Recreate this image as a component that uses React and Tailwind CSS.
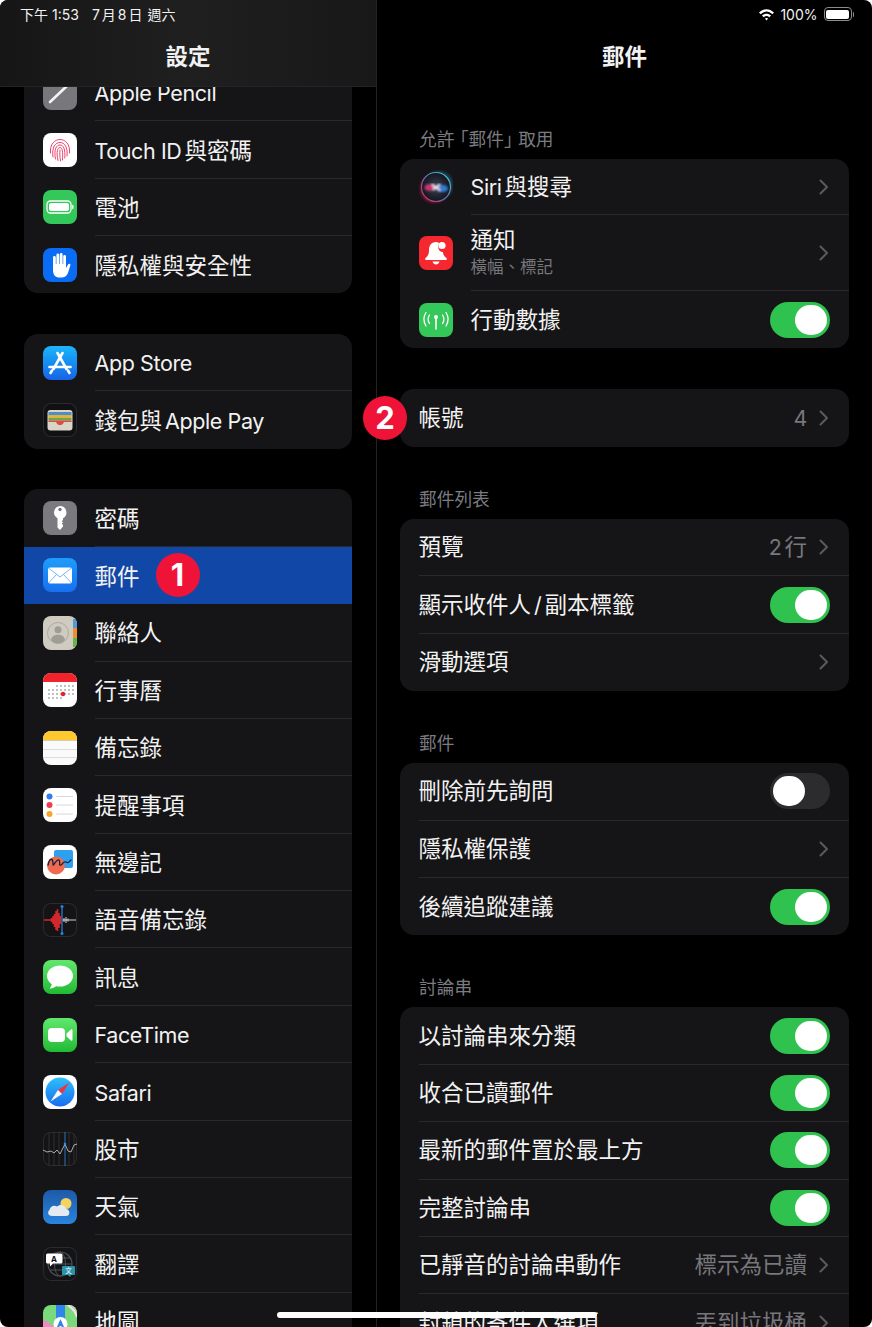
import React from 'react';

// Latin runs are set a little smaller and tighter than the CJK around them
const Mixed = ({ text }) => {
  const parts = text.split(/([A-Za-z0-9 /]*[A-Za-z0-9/])/);
  return parts.map((part, i) => {
    if (!part) return null;
    if (i % 2 === 0) return <span key={i}>{part}</span>;
    const before = parts[i - 1] ? 'ml-[3px]' : '';
    const after = parts[i + 1] ? 'mr-[3px]' : '';
    return <span key={i} className={`text-[21.5px] tracking-[-0.4px] ${before} ${after}`}>{part}</span>;
  });
};

// App icons, all drawn in a 34x34 box
const Tile = ({ className = '', children }) => (
  <div className={`w-[34px] h-[34px] rounded-[8px] overflow-hidden shrink-0 ${className}`}>
    <svg viewBox="0 0 34 34" width="34" height="34">{children}</svg>
  </div>
);

const PencilIcon = () => (
  <Tile className="bg-[#77777c]">
    <path d="M7 26 L25 9" stroke="#f4f4f4" strokeWidth="2.6" strokeLinecap="round" />
  </Tile>
);

const TouchIdIcon = () => (
  <Tile className="bg-white">
    <g fill="none" stroke="#e8436a" strokeWidth="1" strokeLinecap="round">
      <path d="M7.5 20 C6.5 11 12 6.5 17 6.5 C22 6.5 27.5 11 26.5 20" />
      <path d="M10 24 C8.5 14 12.5 9.5 17 9.5 C21.5 9.5 25 14 24 23" />
      <path d="M12.5 26 C10.5 16 13.5 12 17 12 C20.5 12 22.5 16 21.8 25" />
      <path d="M15 27.5 C13 19 14.5 14.5 17 14.5 C19.5 14.5 20 19 19.5 27" />
      <path d="M17 17 C16.5 21 17 25 17.5 28" />
    </g>
  </Tile>
);

const BatteryIcon = () => (
  <Tile className="bg-[#34c759]">
    <rect x="4" y="11" width="24" height="12" rx="3.5" fill="none" stroke="#fff" strokeWidth="1.3" />
    <rect x="6" y="13" width="20" height="8" rx="2" fill="#fff" />
    <rect x="29" y="15" width="1.5" height="4" rx="0.7" fill="#fff" />
  </Tile>
);

const HandIcon = () => (
  <Tile className="bg-[#0a6cf5]">
    <path d="M10 9.5 a1.4 1.4 0 0 1 2.8 0 V16 h.6 V7 a1.4 1.4 0 0 1 2.8 0 V16 h.6 V6.5 a1.4 1.4 0 0 1 2.8 0 V16 h.6 V8.5 a1.4 1.4 0 0 1 2.8 0 V20 l2-3.5 c1-1.7 3-.6 2.3 1 L25 25 c-1.3 3-3.5 4.5-6.5 4.5 h-2 C12.5 29.5 10 27 10 22 Z" fill="#fff" />
  </Tile>
);

const AppStoreIcon = () => (
  <div className="w-[34px] h-[34px] rounded-[8px] overflow-hidden shrink-0 bg-gradient-to-b from-[#1fb5fb] to-[#1a62e6]">
    <svg viewBox="0 0 34 34" width="34" height="34">
      <g stroke="#fff" strokeWidth="2.6" strokeLinecap="round" fill="none">
        <path d="M19.5 7 L10.5 23" />
        <path d="M14.5 7 L23.5 23" />
        <path d="M6.5 21 H27.5" />
        <path d="M7.5 27 L9 24.5" />
        <path d="M26.5 27 L25 24.5" />
      </g>
    </svg>
  </div>
);

const WalletIcon = () => (
  <Tile className="bg-[#111113] ring-1 ring-inset ring-[#2b2b2e]">
    <rect x="4.5" y="7" width="25" height="20.5" rx="3" fill="#d8d4c8" />
    <rect x="5.5" y="9" width="23" height="3.5" fill="#4a8ecb" />
    <rect x="5.5" y="12" width="23" height="3" fill="#e3b23c" />
    <rect x="5.5" y="15" width="23" height="2.5" fill="#68a74f" />
    <path d="M5.5 17.5 H28.5 V19 H21 C20 21.5 18.5 22 17 22 C15.5 22 14 21.5 13 19 H5.5 Z" fill="#dd4c3f" />
  </Tile>
);

const KeyIcon = () => (
  <Tile className="bg-[#7a7a7f]">
    <path d="M17 5 a6.5 6.5 0 0 1 3 12.2 V19 l-1.2 1.2 1.2 1.3 -1.2 1.2 1.2 1.3 V25.5 l-3 3.5 -2.5-2.5 V17.2 A6.5 6.5 0 0 1 17 5 Z" fill="#fff" />
    <circle cx="17" cy="8.5" r="1.7" fill="#7a7a7f" />
  </Tile>
);

const MailIcon = () => (
  <div className="w-[34px] h-[34px] rounded-[8px] overflow-hidden shrink-0 bg-gradient-to-b from-[#1f9dfa] to-[#1a6ff0]">
    <svg viewBox="0 0 34 34" width="34" height="34">
      <rect x="5" y="9.5" width="24" height="16" rx="2" fill="#fff" />
      <path d="M5.5 10 L17 19 L28.5 10 M5.5 25 L13.5 16.5 M28.5 25 L20.5 16.5" fill="none" stroke="#5eaef5" strokeWidth="0.9" />
    </svg>
  </div>
);

const ContactsIcon = () => (
  <Tile className="bg-[#cfcbc1]">
    <circle cx="15" cy="17" r="10.5" fill="none" stroke="#a9a69e" strokeWidth="0.9" />
    <circle cx="15" cy="13.8" r="3.5" fill="#a09d95" />
    <path d="M8 24 C9 19.5 12 18.8 15 18.8 C18 18.8 21 19.5 22 24 C20 26.5 17.5 27.5 15 27.5 C12.5 27.5 10 26.5 8 24 Z" fill="#a09d95" />
    <rect x="30" y="3" width="4" height="9" fill="#4f9bd9" />
    <rect x="30" y="12" width="4" height="10" fill="#ef8f2e" />
    <rect x="30" y="22" width="4" height="9" fill="#68b24c" />
  </Tile>
);

const CalendarIcon = () => (
  <Tile className="bg-white">
    <rect width="34" height="9" fill="#f3232e" />
    {[13, 17, 21, 25].map((y) =>
      [6, 10, 14, 18, 22, 26, 30].map((x) =>
        (y === 13 && x < 14) || (y === 25 && x > 18) ? null : (
          <circle key={`${x}-${y}`} cx={x} cy={y} r="0.7" fill="#555" />
        )
      )
    )}
    <circle cx="20" cy="21" r="2.2" fill="#e2202c" />
  </Tile>
);

const NotesIcon = () => (
  <Tile className="bg-[#fafafa]">
    <rect width="34" height="9" fill="#fdc92f" />
    <rect y="9" width="34" height="0.8" fill="#c9c3a5" />
    <rect y="18" width="34" height="1" fill="#dcdcdc" />
    <rect y="26" width="34" height="1" fill="#dcdcdc" />
  </Tile>
);

const RemindersIcon = () => (
  <Tile className="bg-white">
    <circle cx="6.5" cy="8.5" r="3" fill="#2e7bf2" />
    <circle cx="6.5" cy="17" r="3" fill="#ef3c46" />
    <circle cx="6.5" cy="26" r="3" fill="#f5a623" />
    <path d="M13 8.5 H30 M13 17 H30 M13 26 H30" stroke="#d8d8d8" strokeWidth="1" />
  </Tile>
);

const FreeformIcon = () => (
  <Tile className="bg-white">
    <rect x="11" y="5" width="19" height="18" rx="2" fill="#2f9ff0" />
    <circle cx="13" cy="20.5" r="9" fill="#ee6a50" />
    <path d="M5 20 C7 12 10 13 10 19 C10 23 13 14 16 15 C18 16 15 21 18 20 C20 19 20 16 23 17 C25 18 25 18 28 15" fill="none" stroke="#14203c" strokeWidth="1.3" strokeLinecap="round" />
  </Tile>
);

const VoiceMemosIcon = () => (
  <Tile className="bg-[#141416] ring-1 ring-inset ring-[#2b2b2e]">
    <path d="M1 17 H8 M8.5 15 V19 M10 13 V21 M11.5 11 V24 M13 8 V27 M14.5 6 V28 M16 10 V25 M17.5 13 V21" stroke="#d3272c" strokeWidth="1.5" />
    <path d="M21 15 V19 M23 14 V20 M25 15.5 V18.5 M19 17 H33" stroke="#e5e5e5" strokeWidth="0.9" />
    <path d="M19 3 V31" stroke="#2f83d8" strokeWidth="1.2" />
    <circle cx="19" cy="3.5" r="1.5" fill="#2f83d8" />
    <circle cx="19" cy="30.5" r="1.5" fill="#2f83d8" />
  </Tile>
);

const MessagesIcon = () => (
  <div className="w-[34px] h-[34px] rounded-[8px] overflow-hidden shrink-0 bg-gradient-to-b from-[#5fe86d] to-[#1dbb33]">
    <svg viewBox="0 0 34 34" width="34" height="34">
      <ellipse cx="17" cy="16" rx="13" ry="10.5" fill="#fff" />
      <path d="M9 22 C9 25 8 27 6.5 28.5 C10 28.5 12.5 27 14 25 Z" fill="#fff" />
    </svg>
  </div>
);

const FaceTimeIcon = () => (
  <div className="w-[34px] h-[34px] rounded-[8px] overflow-hidden shrink-0 bg-gradient-to-b from-[#5fe86d] to-[#1dbb33]">
    <svg viewBox="0 0 34 34" width="34" height="34">
      <rect x="5" y="10" width="17" height="14" rx="4" fill="#fff" />
      <path d="M23.5 15.5 L28 11.5 C28.5 11 29.5 11.3 29.5 12 V22 C29.5 22.7 28.5 23 28 22.5 L23.5 18.5 Z" fill="#fff" />
    </svg>
  </div>
);

const SafariIcon = () => (
  <Tile className="bg-white">
    <defs>
      <linearGradient id="safari" x1="0" y1="0" x2="0" y2="1">
        <stop offset="0" stopColor="#2ec0fa" />
        <stop offset="1" stopColor="#1a6cf0" />
      </linearGradient>
    </defs>
    <circle cx="17" cy="17" r="14.5" fill="url(#safari)" />
    <path d="M26.5 7.5 L15 15 L19 19 Z" fill="#f0343c" />
    <path d="M7.5 26.5 L15 15 L19 19 Z" fill="#fff" />
  </Tile>
);

const StocksIcon = () => (
  <Tile className="bg-[#141416] ring-1 ring-inset ring-[#2b2b2e]">
    <path d="M6 0 V34 M11 0 V34 M16 0 V34 M26 0 V34 M31 0 V34" stroke="#3a3a3d" strokeWidth="0.7" />
    <path d="M22 0 V34" stroke="#2f7fd0" strokeWidth="0.9" />
    <path d="M0 18 L4 20 L8 19 L11 21 L14 18 L17 22 L20 16 L22 12 L25 19 L28 20 L31 13 L34 12" fill="none" stroke="#cfcfcf" strokeWidth="0.8" />
    <circle cx="22" cy="12" r="1.3" fill="#2f8fe8" />
  </Tile>
);

const WeatherIcon = () => (
  <div className="w-[34px] h-[34px] rounded-[8px] overflow-hidden shrink-0 bg-gradient-to-b from-[#1d5aa8] to-[#2a84de]">
    <svg viewBox="0 0 34 34" width="34" height="34">
      <circle cx="23" cy="13.5" r="5.5" fill="#f7d25c" />
      <path d="M9 26 C5 26 4 22 6.5 20 C7 16.5 11 14.5 14 16.5 C17 13.5 22.5 15 23 19 C27 19 28 26 23 26 Z" fill="#e4eaf2" />
    </svg>
  </div>
);

const TranslateIcon = () => (
  <Tile className="bg-[#141416] ring-1 ring-inset ring-[#2b2b2e]">
    <circle cx="17" cy="17" r="12" fill="none" stroke="#4c5257" strokeWidth="1.2" />
    <ellipse cx="17" cy="17" rx="5.5" ry="12" fill="none" stroke="#4c5257" strokeWidth="1" />
    <path d="M5 17 H29 M7 11 H27 M7 23 H27" stroke="#4c5257" strokeWidth="1" />
    <path d="M4.5 6.5 H18 A1.5 1.5 0 0 1 19.5 8 V15 A1.5 1.5 0 0 1 18 16.5 H10 L7 19.5 V16.5 H4.5 A1.5 1.5 0 0 1 3 15 V8 A1.5 1.5 0 0 1 4.5 6.5 Z" fill="#fff" />
    <text x="11" y="14.5" fontSize="8" fontWeight="700" textAnchor="middle" fill="#111" fontFamily="Inter, sans-serif">A</text>
    <path d="M20 19 H31 A1 1 0 0 1 32 20 V27 A1 1 0 0 1 31 28 H28 L27 30 L25 28 H20 A1 1 0 0 1 19 27 V20 A1 1 0 0 1 20 19 Z" fill="#2a94ad" />
    <text x="25.5" y="26" fontSize="6.5" textAnchor="middle" fill="#fff" fontFamily="Noto Sans CJK TC, sans-serif">文</text>
  </Tile>
);

const MapsIcon = () => (
  <Tile className="bg-[#7ad97a]">
    <path d="M22 0 H34 V14 C32 7 28 3 22 0 Z" fill="#c9c9c4" />
    <path d="M25 0 C30 4 33 8 34 12" fill="none" stroke="#e9e9e4" strokeWidth="2" />
    <path d="M0 14 L12 22 V34 H0 Z" fill="#ef8ac0" />
    <rect x="13" y="0" width="9" height="34" fill="#2f86ea" />
    <circle cx="17.5" cy="19" r="7" fill="#fff" />
    <path d="M17.5 14 L21.5 23 L17.5 21 L13.5 23 Z" fill="#2f86ea" />
  </Tile>
);

const SiriIcon = () => (
  <div className="w-[34px] h-[34px] shrink-0 rounded-full relative">
    <svg viewBox="0 0 34 34" width="34" height="34">
      <defs>
        <radialGradient id="siriBg">
          <stop offset="0" stopColor="#3a3f55" />
          <stop offset="1" stopColor="#14161c" />
        </radialGradient>
        <linearGradient id="siriRing" x1="0" y1="1" x2="1" y2="0">
          <stop offset="0" stopColor="#e0245e" />
          <stop offset="0.5" stopColor="#5a6fb0" />
          <stop offset="1" stopColor="#4cd5c8" />
        </linearGradient>
        <filter id="siriBlur"><feGaussianBlur stdDeviation="1.6" /></filter>
        <filter id="siriSoft"><feGaussianBlur stdDeviation="0.8" /></filter>
      </defs>
      <circle cx="15" cy="19" r="14" fill="#9c1646" opacity="0.7" filter="url(#siriBlur)" />
      <circle cx="20" cy="15" r="14" fill="#145a78" opacity="0.7" filter="url(#siriBlur)" />
      <circle cx="17" cy="17" r="14.5" fill="url(#siriBg)" stroke="url(#siriRing)" strokeWidth="1.2" />
      <g filter="url(#siriSoft)">
        <ellipse cx="10.5" cy="17.5" rx="5" ry="3.6" fill="#c8356e" />
        <ellipse cx="23.5" cy="18.5" rx="5.5" ry="3.5" fill="#2e7fd6" />
        <path d="M13 14 L21 21 M21 14 L14 20" stroke="#f3e9f4" strokeWidth="2.2" />
      </g>
    </svg>
  </div>
);

const BellIcon = () => (
  <Tile className="bg-[#f5282f]">
    <path d="M17 6 C12 6 10 10 10 14 C10 18.5 8.5 20.5 6.5 22 C6 22.5 6 24 7 24 H27 C28 24 28 22.5 27.5 22 C25.5 20.5 24 18.5 24 16 C20 16 18 12 20 7 C19 6.4 18 6 17 6 Z" fill="#fff" />
    <circle cx="23" cy="9.5" r="3.6" fill="#fff" />
    <path d="M13.5 25.5 H20.5 C20 27.5 18.5 28.5 17 28.5 C15.5 28.5 14 27.5 13.5 25.5 Z" fill="#fff" />
  </Tile>
);

const CellularIcon = () => (
  <Tile className="bg-[#34c759]">
    <g fill="none" stroke="#fff" strokeWidth="1.3" strokeLinecap="round">
      <path d="M10.5 12 C8.8 14.5 8.8 18 10.5 20.5" />
      <path d="M7 9.5 C4.5 13.5 4.5 19 7 23" />
      <path d="M23.5 12 C25.2 14.5 25.2 18 23.5 20.5" />
      <path d="M27 9.5 C29.5 13.5 29.5 19 27 23" />
    </g>
    <circle cx="17" cy="14" r="2" fill="#fff" />
    <path d="M17 14 V26" stroke="#fff" strokeWidth="1.6" strokeLinecap="round" />
  </Tile>
);

const Chevron = () => (
  <svg width="10" height="16" viewBox="0 0 10 16" className="shrink-0">
    <path d="M1.5 1.5 L8 8 L1.5 14.5" fill="none" stroke="#5a5a5e" strokeWidth="2" strokeLinecap="round" strokeLinejoin="round" />
  </svg>
);

const Toggle = ({ on }) => (
  <div className={`w-[60px] h-[36px] rounded-full p-[3px] flex shrink-0 ${on ? 'bg-[#30c24f] justify-end' : 'bg-[#2c2c2f] justify-start'}`}>
    <div className="w-[32px] h-[30px] rounded-full bg-white" />
  </div>
);

const Badge = ({ n, className = '' }) => (
  <div className={`w-[44px] h-[44px] rounded-full bg-[#ee1337] text-white flex items-center justify-center text-[31px] font-bold ${className}`}>
    {n}
  </div>
);

const SidebarRow = ({ icon, label, last, selected, children }) => (
  <div className={`h-[57.4px] flex items-center pl-[19px] ${selected ? 'bg-[#1148a8]' : ''}`}>
    {icon}
    <div className={`flex-1 h-full ml-[17.5px] flex items-center border-[#2a2a2d] ${last || selected ? '' : 'border-b'}`}>
      <span className="text-[22.5px] text-[#f2f2f2] pt-[2px]"><Mixed text={label} /></span>
      {children}
    </div>
  </div>
);

const Card = ({ children, className = '' }) => (
  <div className={`bg-[#151517] rounded-[14px] overflow-hidden ${className}`}>{children}</div>
);

const SectionLabel = ({ children }) => (
  <div className="h-[20px] pl-[19px] mb-[10px] text-[17.7px] leading-[21px] text-[#7b7b80]">{children}</div>
);

const DetailRow = ({ label, value, chevron, toggle, last, icon, sub, height = 'h-[57.4px]' }) => (
  <div className={`${height} flex items-center ${icon ? 'pl-[19px]' : ''}`}>
    {icon}
    <div className={`flex-1 h-full flex items-center pr-[19px] border-[#2a2a2d] ${icon ? 'ml-[17.5px]' : 'ml-[18.5px]'} ${last ? '' : 'border-b'}`}>
      <div className={`flex-1 flex flex-col ${sub ? 'pb-[1px]' : ''}`}>
        <span className="text-[22.5px] leading-[28px] text-[#f2f2f2]"><Mixed text={label} /></span>
        {sub && <span className="text-[16.5px] leading-[22px] mt-[2px] text-[#77777c]">{sub}</span>}
      </div>
      {value && <span className="text-[22.5px] text-[#77777c] mr-[12px]"><Mixed text={value} /></span>}
      {chevron && <div className="mr-[1px]"><Chevron /></div>}
      {toggle !== undefined && <Toggle on={toggle} />}
    </div>
  </div>
);

const firstCard = [
  { icon: <PencilIcon />, label: 'Apple Pencil' },
  { icon: <TouchIdIcon />, label: 'Touch ID與密碼' },
  { icon: <BatteryIcon />, label: '電池' },
  { icon: <HandIcon />, label: '隱私權與安全性', last: true },
];

const secondCard = [
  { icon: <AppStoreIcon />, label: 'App Store' },
  { icon: <WalletIcon />, label: '錢包與Apple Pay', last: true },
];

const thirdCard = [
  { icon: <KeyIcon />, label: '密碼' },
  { icon: <MailIcon />, label: '郵件', selected: true, badge: true },
  { icon: <ContactsIcon />, label: '聯絡人' },
  { icon: <CalendarIcon />, label: '行事曆' },
  { icon: <NotesIcon />, label: '備忘錄' },
  { icon: <RemindersIcon />, label: '提醒事項' },
  { icon: <FreeformIcon />, label: '無邊記' },
  { icon: <VoiceMemosIcon />, label: '語音備忘錄' },
  { icon: <MessagesIcon />, label: '訊息' },
  { icon: <FaceTimeIcon />, label: 'FaceTime' },
  { icon: <SafariIcon />, label: 'Safari' },
  { icon: <StocksIcon />, label: '股市' },
  { icon: <WeatherIcon />, label: '天氣' },
  { icon: <TranslateIcon />, label: '翻譯' },
  { icon: <MapsIcon />, label: '地圖' },
];

const renderSidebarRow = (row) => (
  <SidebarRow key={row.label} icon={row.icon} label={row.label} last={row.last} selected={row.selected}>
    {row.badge && <Badge n="1" className="ml-[16px]" />}
  </SidebarRow>
);

const Sidebar = () => (
  <div className="w-[377px] h-full shrink-0 flex flex-col border-r border-[#222224] overflow-hidden">
    <div className="h-[87px] shrink-0 bg-gradient-to-r from-[#161616] via-[#1f1f1f] to-[#181818] border-b border-[#242426] flex flex-col relative z-10">
      <div className="h-[28px] pl-[20px] flex items-center text-[14px] text-[#f2f2f2]">
        <span>下午</span>
        <span className="ml-[4px]">1:53</span>
        <span className="ml-[13px] tracking-[2px]">7月8日</span>
        <span className="ml-[3px]">週六</span>
      </div>
      <div className="flex-1 flex items-center justify-center text-[22.5px] font-bold text-[#f2f2f2]">設定</div>
    </div>
    <div className="flex-1 min-h-0 px-[24px] -mt-[23.2px] flex flex-col gap-[40.6px]">
      <Card className="shrink-0">{firstCard.map(renderSidebarRow)}</Card>
      <Card className="shrink-0">{secondCard.map(renderSidebarRow)}</Card>
      <Card className="shrink-0">{thirdCard.map(renderSidebarRow)}</Card>
    </div>
  </div>
);

const Detail = () => (
  <div className="flex-1 min-w-0 h-full flex flex-col px-[23px]">
    <div className="h-[28px] shrink-0 -mr-[5px] flex items-center justify-end text-[14px] text-[#f2f2f2]">
      <svg width="17" height="13" viewBox="0 0 17 13" className="mr-[5px]">
        <path d="M1 4.5 C5.5 0 11.5 0 16 4.5 L14.3 6.3 C10.5 2.7 6.5 2.7 2.7 6.3 Z M4 7.5 C6.5 5 10.5 5 13 7.5 L11.3 9.2 C9.5 7.6 7.5 7.6 5.7 9.2 Z M8.5 12.5 L6.8 10.6 C7.8 9.8 9.2 9.8 10.2 10.6 Z" fill="#fff" />
      </svg>
      <span className="mr-[6px]">100%</span>
      <div className="flex items-center">
        <div className="w-[28px] h-[14px] rounded-[4px] border border-[#8c8c8c] p-[1.5px]">
          <div className="w-full h-full rounded-[2px] bg-white" />
        </div>
        <div className="w-[1.5px] h-[5px] ml-[1px] rounded-r bg-[#8c8c8c]" />
      </div>
    </div>
    <div className="h-[59px] shrink-0 pb-[1px] flex items-center justify-center text-[22.5px] font-bold text-[#f2f2f2]">郵件</div>
    <div className="h-[42px] shrink-0" />
    <SectionLabel>允許<span className="-mx-[3.5px]">「郵件」</span>取用</SectionLabel>
    <Card className="shrink-0">
      <DetailRow height="h-[56px]" icon={<SiriIcon />} label="Siri與搜尋" chevron />
      <DetailRow height="h-[76px]" icon={<BellIcon />} label="通知" sub="橫幅、標記" chevron />
      <DetailRow height="h-[57px]" icon={<CellularIcon />} label="行動數據" toggle last />
    </Card>
    <div className="relative shrink-0 mt-[41px]">
      <Card><DetailRow height="h-[58px]" label="帳號" value="4" chevron last /></Card>
      <Badge n="2" className="absolute -left-[37px] top-[7px]" />
    </div>
    <div className="h-[42px] shrink-0" />
    <SectionLabel>郵件列表</SectionLabel>
    <Card className="shrink-0">
      <DetailRow label="預覽" value="2行" chevron />
      <DetailRow label="顯示收件人/副本標籤" toggle />
      <DetailRow label="滑動選項" chevron last />
    </Card>
    <div className="h-[42px] shrink-0" />
    <SectionLabel>郵件</SectionLabel>
    <Card className="shrink-0">
      <DetailRow label="刪除前先詢問" toggle={false} />
      <DetailRow label="隱私權保護" chevron />
      <DetailRow label="後續追蹤建議" toggle last />
    </Card>
    <div className="h-[42px] shrink-0" />
    <SectionLabel>討論串</SectionLabel>
    <Card className="shrink-0">
      <DetailRow label="以討論串來分類" toggle />
      <DetailRow label="收合已讀郵件" toggle />
      <DetailRow label="最新的郵件置於最上方" toggle />
      <DetailRow label="完整討論串" toggle />
      <DetailRow label="已靜音的討論串動作" value="標示為已讀" chevron />
      <DetailRow label="封鎖的寄件人選項" value="丟到垃圾桶" chevron last />
    </Card>
  </div>
);

export default function App() {
  return (
    <div className="w-[872px] h-[1327px] bg-white overflow-hidden font-['Inter','Noto_Sans_CJK_TC',sans-serif]">
      <div className="w-full h-full relative bg-black rounded-[8px] overflow-hidden flex">
        <Sidebar />
        <Detail />
        {/* home indicator */}
        <div className="absolute left-[277px] bottom-[9px] w-[320px] h-[6px] rounded-full bg-white" />
      </div>
    </div>
  );
}
